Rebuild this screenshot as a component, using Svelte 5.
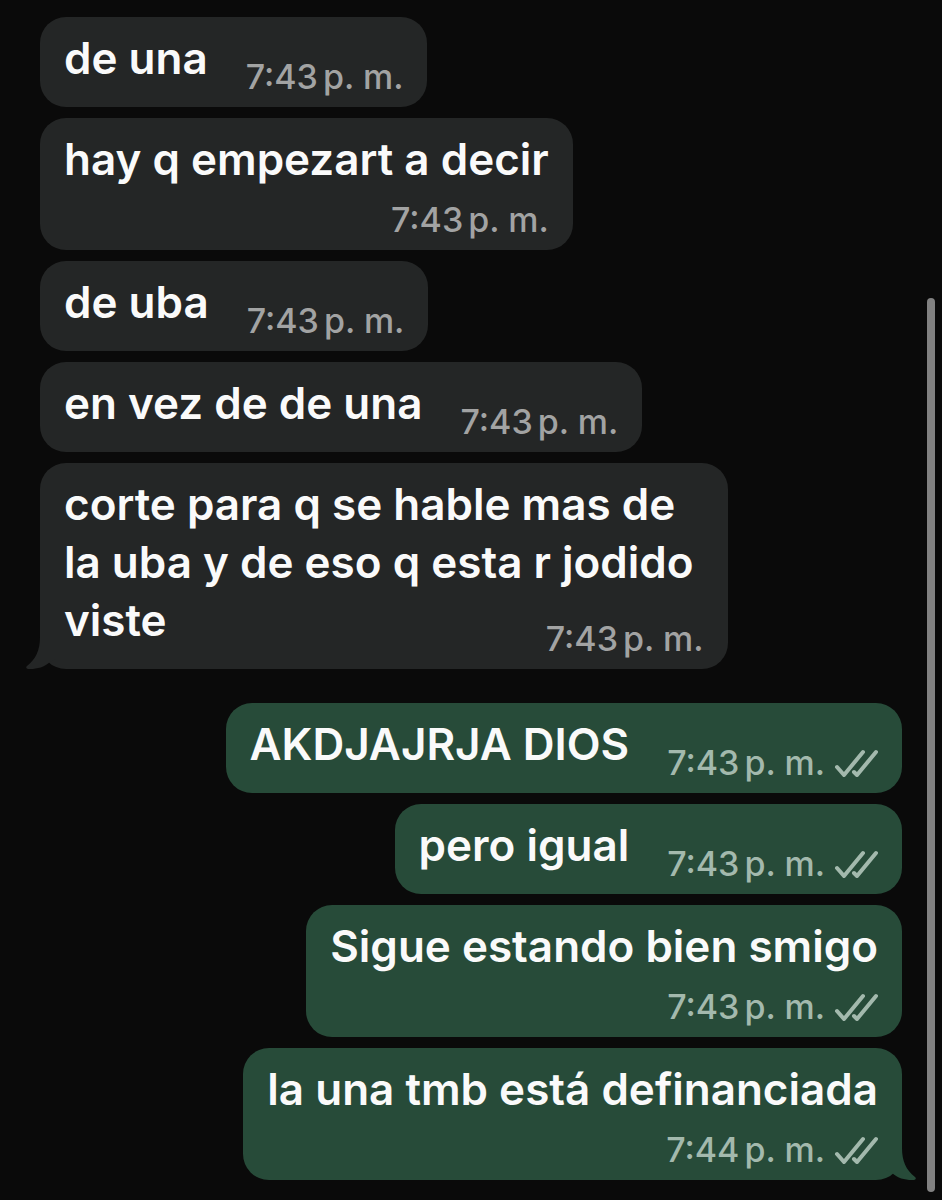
<script lang="ts">
  type Message = {
    text: string;
    time: string;
    mine?: boolean;
    wrap?: boolean;
    tail?: boolean;
  };

  const messages: Message[] = [
    { text: "de una", time: "7:43" },
    { text: "hay q empezart a decir", time: "7:43", wrap: true },
    { text: "de uba", time: "7:43" },
    { text: "en vez de de una", time: "7:43" },
    {
      text: "corte para q se hable mas de\nla uba y de eso q esta r jodido\nviste",
      time: "7:43",
      tail: true,
    },
    { text: "AKDJAJRJA DIOS", time: "7:43", mine: true },
    { text: "pero igual", time: "7:43", mine: true },
    { text: "Sigue estando bien smigo", time: "7:43", mine: true, wrap: true },
    {
      text: "la una tmb está definanciada",
      time: "7:44",
      mine: true,
      wrap: true,
      tail: true,
    },
  ];
</script>

<main class="chat">
  {#each messages as { text, time, mine, wrap, tail }}
    <article
      class="bubble"
      class:mine
      class:wrap
      class:long={text.includes("\n")}
    >
      <p>
        {#each text.split("\n") as line}
          <span class="line">{line}</span>
        {/each}
      </p>
      <div class="meta">
        <time><span>{time}</span><span>p. m.</span></time>
        {#if mine}
          <svg class="ticks" viewBox="0 0 44 28" role="img" aria-label="Entregado">
            <path d="M3 18L10 26L29 3M20 23L23 26L42 3" />
          </svg>
        {/if}
      </div>
      {#if tail}
        <svg class="tail-shape" viewBox="0 0 30 50" aria-hidden="true">
          <path d="M14 0V18C14 31 10 40 1 47C-1 49 1 50 4 50C12 50 18 48 24 43L30 40V0Z" />
        </svg>
      {/if}
    </article>
  {/each}
  <div class="scrollbar"></div>
</main>

<style>
  :global(body) {
    margin: 0;
    background: #0a0a0a;
  }

  .chat {
    position: relative;
    display: flex;
    flex-direction: column;
    align-items: flex-start;
    gap: 11px;
    box-sizing: border-box;
    min-height: 100vh;
    padding: 17px 40px 19px;
    font-family: Inter, "Liberation Sans", sans-serif;
    color: #fafafa;
  }

  .bubble {
    position: relative;
    display: flex;
    align-items: flex-end;
    gap: 38px;
    box-sizing: border-box;
    padding: 12px 24px 20px;
    border-radius: 26px;
    background: #242626;
  }

  .mine {
    align-self: flex-end;
    background: #274b39;
  }

  .bubble:not(.mine) + .mine {
    margin-top: 23px;
  }

  p {
    margin: 0;
    font-size: 44px;
    font-weight: 600;
    line-height: 58px;
  }

  .line {
    display: block;
    white-space: nowrap;
  }

  .meta {
    display: flex;
    align-items: center;
    gap: 9px;
    height: 40px;
    margin-bottom: -10px;
    color: #a2a3a3;
  }

  .mine .meta {
    color: #a3b9ad;
  }

  .wrap {
    flex-direction: column;
    gap: 12px;
  }

  time {
    display: flex;
    gap: 5px;
    font-size: 34px;
    font-weight: 500;
    line-height: 40px;
    white-space: nowrap;
  }

  .long {
    padding-right: 34px;
  }

  .long .meta {
    position: absolute;
    right: 24px;
    bottom: 20px;
  }

  .ticks {
    width: 44px;
    height: 28px;
    fill: none;
    stroke: currentColor;
    stroke-width: 4;
    stroke-linecap: round;
    stroke-linejoin: round;
  }

  .tail-shape {
    position: absolute;
    bottom: 0;
    left: -14px;
    width: 30px;
    height: 50px;
    fill: #242626;
  }

  .mine .tail-shape {
    right: -14px;
    left: auto;
    fill: #274b39;
    transform: scaleX(-1);
  }

  .scrollbar {
    position: absolute;
    top: 298px;
    right: 7px;
    bottom: 8px;
    width: 8px;
    border-radius: 4px;
    background: #818181;
  }
</style>
